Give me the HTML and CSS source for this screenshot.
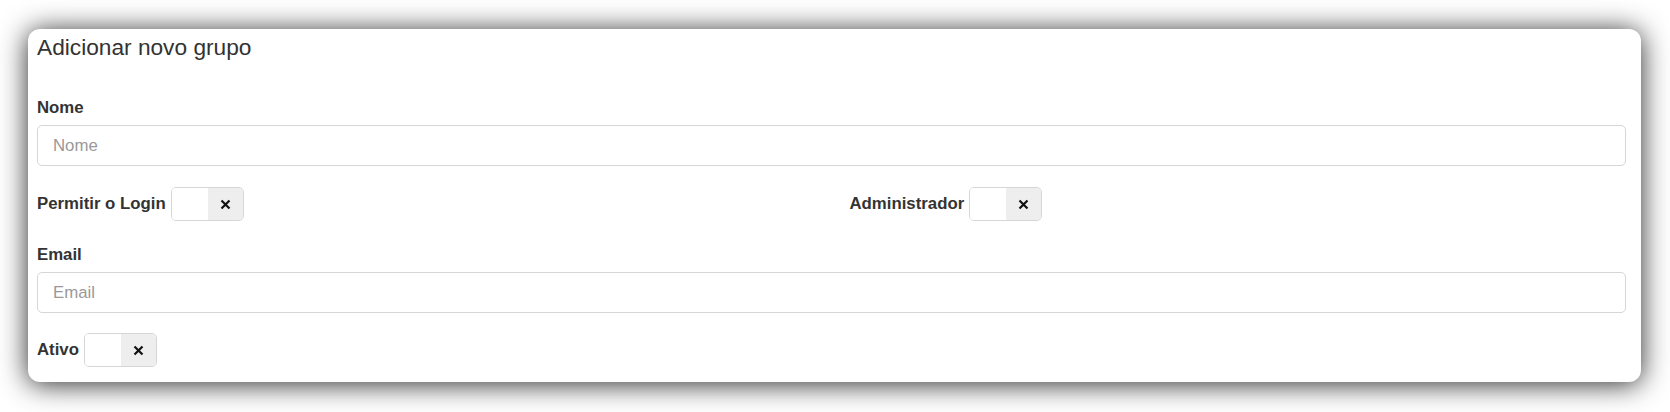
FILE: index.html
```html
<!DOCTYPE html>
<html lang="pt">
<head>
<meta charset="utf-8">
<title>Adicionar novo grupo</title>
<link rel="stylesheet" href="styles.css">
</head>
<body>
<div class="card">
  <h4 class="title">Adicionar novo grupo</h4>
  <div class="field">
    <label class="label" for="nome">Nome</label>
    <input class="input" id="nome" type="text" placeholder="Nome">
  </div>
  <div class="cols">
    <div class="check">
      <span class="label">Permitir o Login</span>
      <span class="toggle"><span class="on"></span><span class="off"><svg width="11" height="11" viewBox="0 0 11 11"><path d="M1.5 1.5 L9.5 9.5 M9.5 1.5 L1.5 9.5" stroke="#111" stroke-width="2.2" stroke-linecap="butt"/></svg></span></span>
    </div>
    <div class="check">
      <span class="label">Administrador</span>
      <span class="toggle"><span class="on"></span><span class="off"><svg width="11" height="11" viewBox="0 0 11 11"><path d="M1.5 1.5 L9.5 9.5 M9.5 1.5 L1.5 9.5" stroke="#111" stroke-width="2.2" stroke-linecap="butt"/></svg></span></span>
    </div>
  </div>
  <div class="field field-email">
    <label class="label" for="email">Email</label>
    <input class="input" id="email" type="text" placeholder="Email">
  </div>
  <div class="check check-last">
    <span class="label">Ativo</span>
    <span class="toggle"><span class="on"></span><span class="off"><svg width="11" height="11" viewBox="0 0 11 11"><path d="M1.5 1.5 L9.5 9.5 M9.5 1.5 L1.5 9.5" stroke="#111" stroke-width="2.2" stroke-linecap="butt"/></svg></span></span>
  </div>
</div>
</body>
</html>
```

FILE: styles.css
```css
* { box-sizing: border-box; }
html, body { margin: 0; padding: 0; background: #fff; }
body {
  font-family: "Liberation Sans", Arial, Helvetica, sans-serif;
  color: #333;
  padding: 29px 29px 30px 28px;
  min-height: 412px;
}
.card {
  width: 1613px;
  height: 353px;
  background: #fff;
  border-radius: 12px;
  box-shadow: 0 2px 28px rgba(0, 0, 0, 0.85);
  padding: 6px 15px 0 9px;
}
.title {
  margin: 0;
  font-size: 22.7px;
  line-height: 24px;
  font-weight: 400;
  color: #333;
}
.field { margin-top: 37px; }
.field-email { margin-top: 22px; }
.label {
  display: block;
  font-size: 16.8px;
  line-height: 24px;
  font-weight: 700;
  color: #333;
}
.field .label { margin-bottom: 5px; }
.input {
  display: block;
  width: 100%;
  height: 41px;
  padding: 0 15px;
  border: 1px solid #d6d6d6;
  border-radius: 5px;
  font-family: inherit;
  font-size: 16.8px;
  color: #555;
  background: #fff;
  outline: none;
}
.input::placeholder { color: #999; }
.cols {
  display: grid;
  grid-template-columns: 1fr 1fr;
  column-gap: 36px;
  margin-top: 21px;
}
.check {
  display: flex;
  align-items: center;
}
.check-last { margin-top: 20px; }
.toggle {
  display: flex;
  margin-left: 5px;
  width: 73px;
  height: 34px;
  border: 1px solid #d6d6d6;
  border-radius: 5px;
  overflow: hidden;
}
.on { width: 36px; background: #fff; }
.off {
  flex: 1;
  background: #eee;
  display: flex;
  align-items: center;
  justify-content: center;
}
.off svg { display: block; }
```
